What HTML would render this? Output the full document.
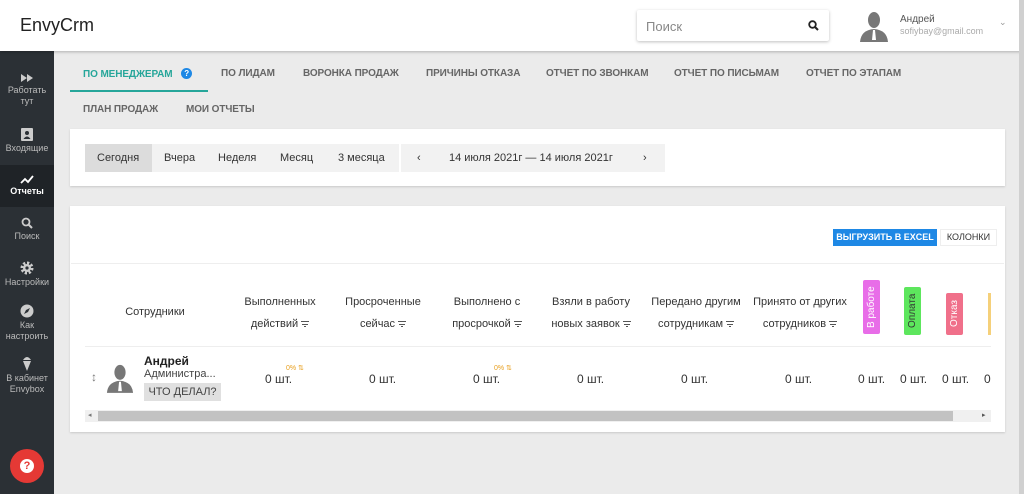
<!DOCTYPE html><html><head><meta charset="utf-8"><style>
*{box-sizing:border-box;margin:0;padding:0}
body{width:1024px;height:494px;overflow:hidden;font-family:"Liberation Sans",sans-serif;background:#ebebeb;position:relative;color:#333}
.hdr{position:absolute;left:0;top:0;width:1024px;height:51px;background:#fff;box-shadow:0 1px 3px rgba(0,0,0,.25);z-index:2}
.logo{position:absolute;left:20px;top:15px;font-size:18px;color:#222}
.search{position:absolute;left:637px;top:10px;width:192px;height:31px;border-radius:2px;box-shadow:0 1px 3px rgba(0,0,0,.25);font-size:13px;color:#888;padding:9px 9px}
.side{position:absolute;left:0;top:51px;width:54px;height:443px;background:#2b3035}
.si{position:absolute;left:0;width:54px;text-align:center;font-size:9px;color:#bbb;line-height:11px}
.si svg{display:block;margin:0 auto 2px}
.tab{position:absolute;font-size:10px;color:#666;text-transform:uppercase;font-weight:bold;letter-spacing:-0.1px}
.card{position:absolute;background:#fff;box-shadow:0 1px 2px rgba(0,0,0,.15)}
.btn{position:absolute;top:144px;height:28px;font-size:11px;line-height:28px;padding:0 12px;color:#333}
.th{position:absolute;font-size:11px;color:#333;text-align:center;line-height:22px}
.f{display:inline-block;width:8px;height:6px;border-top:1px solid #555;vertical-align:middle;position:relative;margin-left:3px}
.f:before{content:"";position:absolute;left:1px;right:1px;top:2px;border-top:1px solid #555}
.f:after{content:"";position:absolute;left:3px;right:3px;top:4px;border-top:1px solid #555}
.v{position:absolute;font-size:12px;color:#333}
.tag{position:absolute;width:17px;border-radius:2px;font-size:10px;color:#fff;writing-mode:vertical-rl;transform:rotate(180deg);text-align:center;line-height:17px}
</style></head><body>
<div class="hdr"><div class="logo">EnvyCrm</div>
<div class="search">Поиск<svg style="position:absolute;right:10px;top:10px" width="11" height="11" viewBox="0 0 11 11"><circle cx="4.5" cy="4.5" r="3.3" fill="none" stroke="#222" stroke-width="1.8"/><path d="M7 7l3 3" stroke="#222" stroke-width="2"/></svg></div>
<svg style="position:absolute;left:859px;top:10px" width="30" height="32" viewBox="0 0 30 32"><ellipse cx="15" cy="10" rx="6" ry="8" fill="#777"/><path d="M1 32q1-12 14-13q13 1 14 13z" fill="#777"/><path d="M14 20h2l1 10h-4z" fill="#fff"/></svg>
<div style="position:absolute;left:900px;top:14px;font-size:10px;color:#555">Андрей</div>
<div style="position:absolute;left:900px;top:26px;font-size:9px;color:#aaa">sofiybay@gmail.com</div>
<div style="position:absolute;left:999px;top:17px;font-size:9px;color:#999">⌄</div>
</div>
<div style="position:absolute;right:0;top:0;width:5px;height:494px;background:#d0d0d0;z-index:3"></div>
<div class="side">
<div class="si" style="top:22px"><svg width="14" height="10"><path d="M1 1l6 4-6 4zM7 1l6 4-6 4z" fill="#ccc"/></svg>Работать<br>тут</div>
<div class="si" style="top:76px"><svg width="12" height="14"><rect x="0" y="1" width="12" height="13" rx="1" fill="#ccc"/><circle cx="6" cy="6" r="2" fill="#2b3035"/><path d="M2.5 12q3.5-5 7 0z" fill="#2b3035"/></svg>Входящие</div>
<div style="position:absolute;top:114px;left:0;width:54px;height:42px;background:#1f2327"></div>
<div class="si" style="top:123px;color:#fff;font-weight:bold"><svg width="14" height="10"><path d="M1 9l4-4 3 3 5-6" stroke="#fff" stroke-width="1.8" fill="none"/></svg>Отчеты</div>
<div class="si" style="top:166px"><svg width="12" height="12"><circle cx="5" cy="5" r="3.5" fill="none" stroke="#ccc" stroke-width="1.8"/><path d="M7.5 7.5l3.5 3.5" stroke="#ccc" stroke-width="2"/></svg>Поиск</div>
<div class="si" style="top:210px"><svg width="14" height="14"><circle cx="7" cy="7" r="5" fill="none" stroke="#ccc" stroke-width="3" stroke-dasharray="2.2 1.7"/><circle cx="7" cy="7" r="4" fill="#ccc"/><circle cx="7" cy="7" r="1.6" fill="#2b3035"/></svg>Настройки</div>
<div class="si" style="top:253px"><svg width="14" height="14"><circle cx="7" cy="7" r="6.5" fill="#ccc"/><path d="M4 10l2-4 4-2-2 4z" fill="#2b3035"/></svg>Как<br>настроить</div>
<div class="si" style="top:304px"><svg width="10" height="16"><path d="M1 5q4-6 8 0h-8zM1 6h8l-4 10z" fill="#ccc"/></svg>В кабинет<br>Envybox</div>
<div style="position:absolute;left:10px;top:398px;width:34px;height:34px;border-radius:50%;background:#e53935"><div style="position:absolute;left:10px;top:10px;width:14px;height:14px;border-radius:50%;background:#fff;color:#e53935;font-size:11px;font-weight:bold;text-align:center;line-height:14px">?</div></div>
</div>
<div class="tab" style="left:83px;top:68px;color:#26a69a">По менеджерам <span style="display:inline-block;width:11px;height:11px;border-radius:50%;background:#1e88e5;color:#fff;font-size:8px;text-align:center;line-height:11px;margin-left:6px;vertical-align:1px">?</span></div>
<div style="position:absolute;left:70px;top:90px;width:138px;height:2px;background:#26a69a"></div>
<div class="tab" style="left:221px;top:68px">По лидам</div>
<div class="tab" style="left:303px;top:68px">Воронка продаж</div>
<div class="tab" style="left:426px;top:68px">Причины отказа</div>
<div class="tab" style="left:546px;top:68px">Отчет по звонкам</div>
<div class="tab" style="left:674px;top:68px">Отчет по письмам</div>
<div class="tab" style="left:806px;top:68px">Отчет по этапам</div>
<div class="tab" style="left:83px;top:104px">План продаж</div>
<div class="tab" style="left:186px;top:104px">Мои отчеты</div>
<div class="card" style="left:70px;top:129px;width:935px;height:57px"></div>
<div style="position:absolute;left:85px;top:144px;width:314px;height:28px;background:#f2f2f2"></div>
<div style="position:absolute;left:85px;top:144px;width:67px;height:28px;background:#dcdcdc"></div>
<div class="btn" style="left:85px">Сегодня</div><div class="btn" style="left:152px">Вчера</div><div class="btn" style="left:206px">Неделя</div><div class="btn" style="left:268px">Месяц</div><div class="btn" style="left:326px">3 месяца</div>
<div style="position:absolute;left:401px;top:144px;width:264px;height:28px;background:#f2f2f2;font-size:11px;line-height:28px"><span style="position:absolute;left:16px">‹</span><span style="position:absolute;left:48px">14 июля 2021г — 14 июля 2021г</span><span style="position:absolute;left:242px">›</span></div>
<div class="card" style="left:70px;top:206px;width:935px;height:226px"></div>
<div style="position:absolute;left:71px;top:263px;width:933px;height:1px;background:#eee"></div>
<div style="position:absolute;left:833px;top:229px;width:104px;height:17px;background:#1e88e5;color:#fff;font-size:9px;line-height:17px;text-align:center;font-weight:bold">ВЫГРУЗИТЬ В EXCEL</div>
<div style="position:absolute;left:940px;top:229px;width:57px;height:17px;border:1px solid #eee;font-size:9px;line-height:15px;text-align:center">КОЛОНКИ</div>
<div class="th" style="left:100px;top:301px;width:110px">Сотрудники</div>
<div class="th" style="left:225px;top:291px;width:110px">Выполненных<br>действий<span class="f"></span></div>
<div class="th" style="left:328px;top:291px;width:110px">Просроченные<br>сейчас<span class="f"></span></div>
<div class="th" style="left:432px;top:291px;width:110px">Выполнено с<br>просрочкой<span class="f"></span></div>
<div class="th" style="left:536px;top:291px;width:110px">Взяли в работу<br>новых заявок<span class="f"></span></div>
<div class="th" style="left:641px;top:291px;width:110px">Передано другим<br>сотрудникам<span class="f"></span></div>
<div class="th" style="left:745px;top:291px;width:110px">Принято от других<br>сотрудников<span class="f"></span></div>
<div class="tag" style="left:863px;top:280px;height:54px;background:#e86de8">В работе</div>
<div class="tag" style="left:904px;top:287px;height:48px;background:#5de65d;color:#333">Оплата</div>
<div class="tag" style="left:946px;top:293px;height:42px;background:#f0708a">Отказ</div>
<div style="position:absolute;left:988px;top:293px;width:3px;height:42px;background:#f5d07a"></div>
<div style="position:absolute;left:85px;top:346px;width:906px;height:1px;background:#eee"></div>
<div style="position:absolute;left:91px;top:370px;font-size:12px;color:#777">↕</div>
<svg style="position:absolute;left:106px;top:362px" width="28" height="32" viewBox="0 0 30 32"><ellipse cx="15" cy="10" rx="6" ry="8" fill="#777"/><path d="M1 32q1-12 14-13q13 1 14 13z" fill="#777"/><path d="M14 20h2l1 10h-4z" fill="#fff"/></svg>
<div style="position:absolute;left:144px;top:354px;font-size:12px;font-weight:bold;color:#222">Андрей</div>
<div style="position:absolute;left:144px;top:368px;font-size:11px;color:#444">Администра...</div>
<div style="position:absolute;left:144px;top:383px;width:77px;height:18px;background:#e0e0e0;font-size:11px;line-height:18px;text-align:center;color:#444">ЧТО ДЕЛАЛ?</div>
<div class="v" style="left:265px;top:372px">0 шт.</div><div style="position:absolute;left:286px;top:364px;font-size:7px;color:#e8a020">0% ⇅</div>
<div class="v" style="left:369px;top:372px">0 шт.</div>
<div class="v" style="left:473px;top:372px">0 шт.</div><div style="position:absolute;left:494px;top:364px;font-size:7px;color:#e8a020">0% ⇅</div>
<div class="v" style="left:577px;top:372px">0 шт.</div>
<div class="v" style="left:681px;top:372px">0 шт.</div>
<div class="v" style="left:785px;top:372px">0 шт.</div>
<div class="v" style="left:858px;top:372px">0 шт.</div><div class="v" style="left:900px;top:372px">0 шт.</div><div class="v" style="left:942px;top:372px">0 шт.</div><div class="v" style="left:984px;top:372px">0</div>
<div style="position:absolute;left:85px;top:410px;width:906px;height:12px;background:#f0f0f0"></div>
<div style="position:absolute;left:98px;top:411px;width:855px;height:10px;background:#c2c2c2"></div>
<div style="position:absolute;left:88px;top:410px;font-size:7px;color:#777;line-height:12px">◂</div>
<div style="position:absolute;left:982px;top:410px;font-size:7px;color:#555;line-height:12px">▸</div>
</body></html>
